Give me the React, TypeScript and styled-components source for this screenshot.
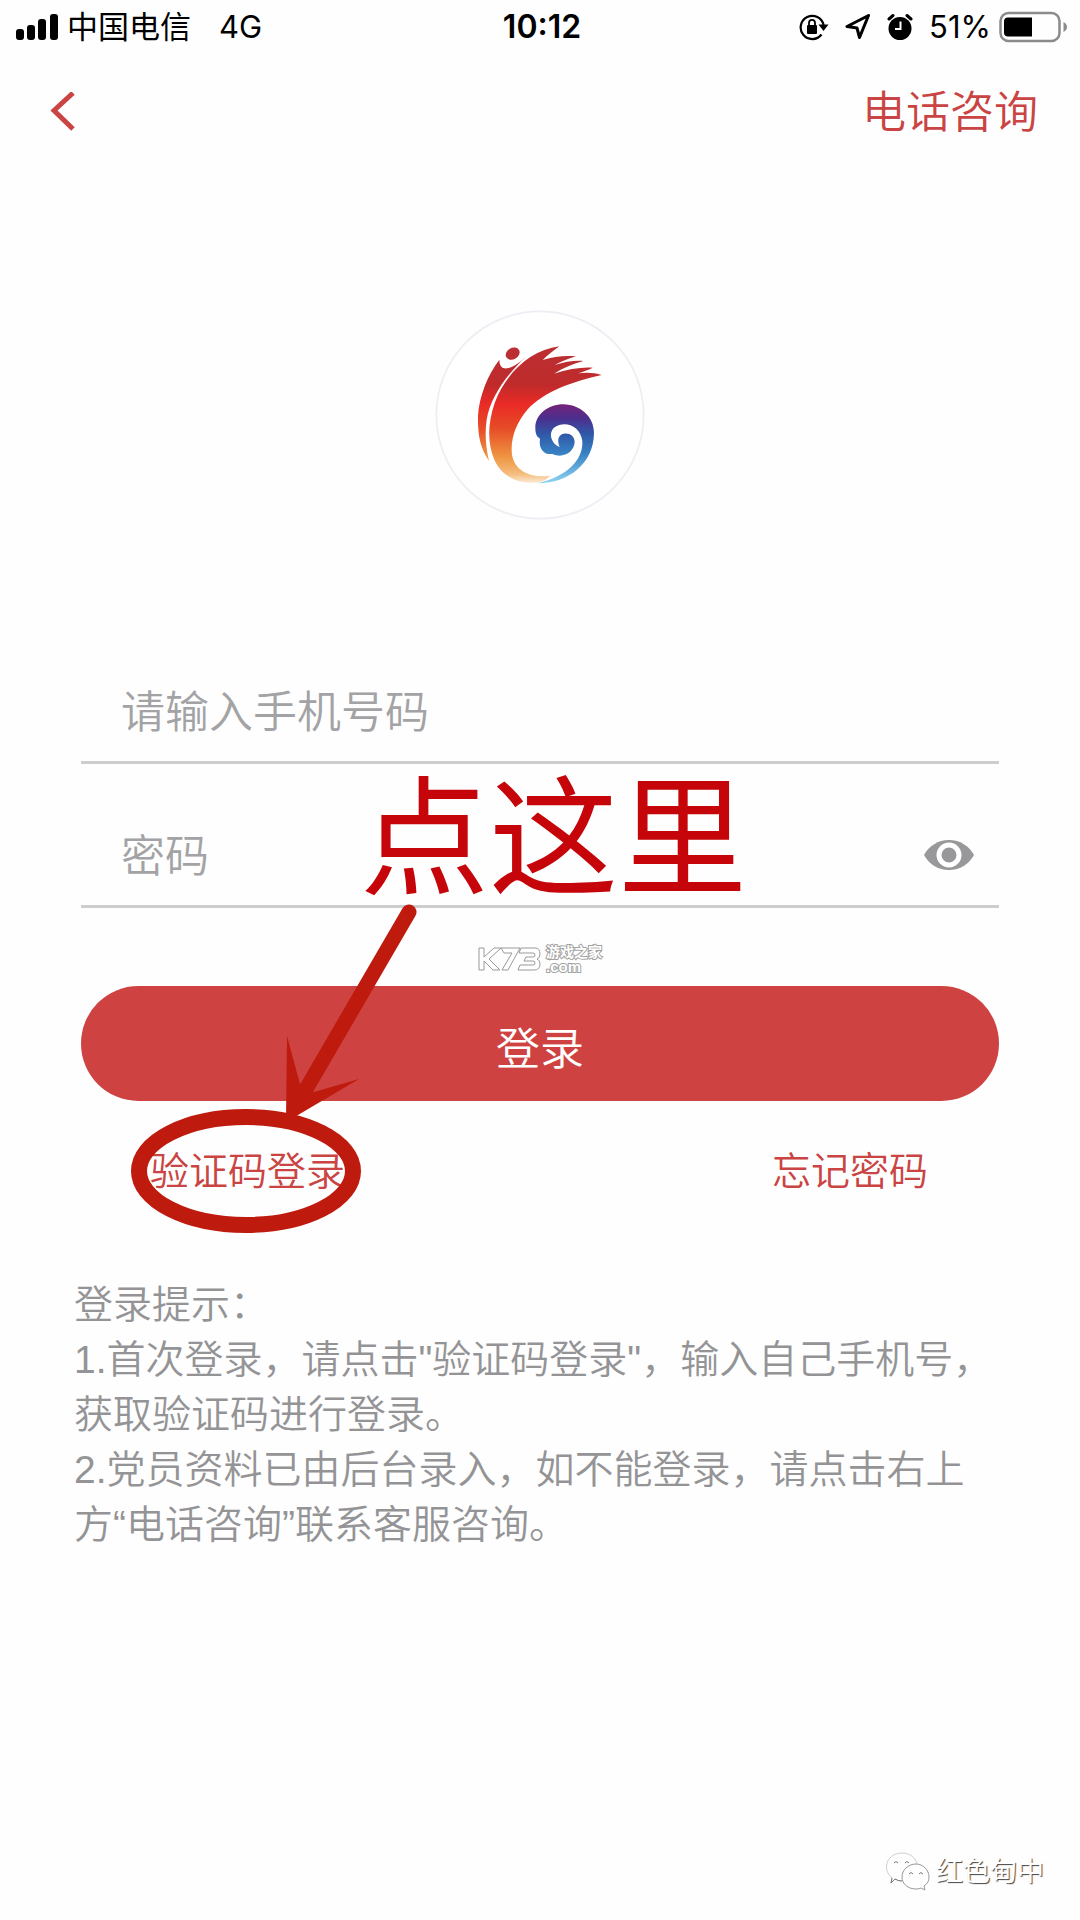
import React, { useState } from "react";
import styled, { createGlobalStyle } from "styled-components";

const latinCjk = `"Liberation Sans", "Noto Sans CJK SC", sans-serif`;
const red = "#ca4443";
const ink = "#be1a0e";

const GlobalStyle = createGlobalStyle`
  *, *::before, *::after { box-sizing: border-box; }
  body { margin: 0; background: #fefefe; font-family: ${latinCjk}; }
  button, input { font-family: inherit; }
`;

const Page = styled.div`
  display: flex;
  flex-direction: column;
  min-height: 100vh;
  overflow: hidden;
`;

const StatusBar = styled.div`
  display: grid;
  grid-template-columns: 1fr auto 1fr;
  align-items: center;
  height: 54px;
  padding: 0 12px 0 16px;
  color: #000;
  font-family: Inter, "Noto Sans CJK SC", sans-serif;
  font-size: 31px;
  line-height: 40px;
`;

const StatusGroup = styled.div<{ $end?: boolean }>`
  display: flex;
  align-items: center;
  justify-content: ${(p) => (p.$end ? "flex-end" : "flex-start")};
`;

const Carrier = styled.span`
  margin: 0 28px 0 8px;
`;

const Clock = styled.time`
  font-size: 32px;
  font-weight: 600;
`;

const StatusIcons = styled.div`
  display: flex;
  align-items: center;
  gap: 16px;
  margin-right: 16px;
`;

const Percent = styled.span`
  margin-right: 8px;
`;

const Header = styled.header`
  display: flex;
  align-items: center;
  justify-content: space-between;
  height: 114px;
  padding: 4px 42px 0 48px;
`;

const BackButton = styled.button`
  display: flex;
  padding: 0;
  border: 0;
  background: none;
`;

const TextLink = styled.a<{ $size: number }>`
  color: ${red};
  font-size: ${(p) => p.$size}px;
  font-weight: 350;
  line-height: 60px;
  text-decoration: none;
`;

const LogoRow = styled.div`
  display: flex;
  justify-content: center;
  margin: 142px 0 140px;
`;

const Form = styled.form`
  position: relative;
  padding: 0 81px;
`;

const Field = styled.div`
  display: flex;
  align-items: center;
  height: 104px;
  padding: 0 24px 0 40px;
  border-bottom: 3px solid #cdcdcd;

  & + & {
    margin-top: 40px;
  }
`;

const InputLabel = styled.label`
  display: flex;
  flex: 1;
  min-width: 0;
`;

const TextInput = styled.input`
  width: 100%;
  height: 76px;
  padding: 4px 0 0;
  border: 0;
  outline: 0;
  background: none;
  color: #333;
  font-size: 44px;
  font-weight: 350;

  &::placeholder {
    color: #a3a3a5;
    opacity: 1;
  }
`;

const EyeButton = styled.button`
  display: flex;
  padding: 0;
  border: 0;
  background: none;
`;

const SubmitButton = styled.button`
  display: block;
  width: 100%;
  height: 115px;
  margin-top: 78px;
  padding: 4px 0 0;
  border: 0;
  border-radius: 58px;
  background: #ce4341;
  color: #fff;
  font-size: 44px;
  font-weight: 350;
`;

const LinkRow = styled.div`
  display: flex;
  justify-content: space-between;
  padding: 0 71px 0 69px;
  margin-top: 41px;
`;

const Tips = styled.section`
  margin-top: 75px;
  padding: 0 80px 0 74px;
  color: #949496;
  font-size: 39px;
  font-weight: 350;
  line-height: 55px;
`;

const TipLine = styled.p`
  margin: 0;
`;

const Footer = styled.footer`
  display: flex;
  align-items: center;
  justify-content: flex-end;
  gap: 6px;
  margin-top: auto;
  padding: 0 36px 28px 0;
`;

const Account = styled.span`
  color: #fff;
  font-size: 27px;
  font-weight: 400;
  line-height: 40px;
  text-shadow: 1px 1px 1px #444;
`;

const Callout = styled.strong`
  position: absolute;
  top: 90px;
  left: 360px;
  color: #c50509;
  font-size: 129px;
  font-weight: 400;
  line-height: 180px;
  white-space: nowrap;
  pointer-events: none;
`;

const Marker = styled.svg`
  position: absolute;
  top: 240px;
  left: 120px;
  pointer-events: none;
`;

const SiteMark = styled.div`
  position: absolute;
  top: 284px;
  left: 0;
  right: 0;
  display: flex;
  align-items: center;
  justify-content: center;
  gap: 4px;
  color: #fff;
  pointer-events: none;
`;

const SiteText = styled.div`
  display: flex;
  flex-direction: column;
  font-size: 14px;
  font-weight: 700;
  line-height: 16px;
  -webkit-text-stroke: 2px #a2a2a2;
  paint-order: stroke fill;
`;

const Domain = styled.span`
  font-size: 15px;
  line-height: 14px;
`;

function SignalIcon() {
  return (
    <svg width="43" height="28" viewBox="0 0 43 28" aria-hidden="true">
      <rect x="0" y="16" width="8" height="11" rx="3" />
      <rect x="11" y="12" width="8" height="15" rx="3" />
      <rect x="22" y="6" width="8" height="21" rx="3" />
      <rect x="34" y="1" width="8" height="26" rx="3" />
    </svg>
  );
}

function RotationLockIcon() {
  return (
    <svg width="30" height="28" viewBox="0 0 30 28" aria-hidden="true">
      <path d="M22.5 21.5A11.6 11.6 0 1 1 24.6 12" fill="none" stroke="#000" strokeWidth="2.2" />
      <path d="M19.5 11.5H29.5L24.5 18Z" />
      <rect x="8" y="12" width="10" height="9" rx="1" />
      <path d="M10 12.500V10a3 3.200 0 0 1 6 0v2.500" fill="none" stroke="#000" strokeWidth="1.800" />
    </svg>
  );
}

function LocationIcon() {
  return (
    <svg width="26" height="28" viewBox="0 0 26 28" aria-hidden="true">
      <path d="M23.500 2.500L2 13.500L12 15L14.500 24.500Z" fill="none" stroke="#000" strokeWidth="3" strokeLinejoin="round" />
    </svg>
  );
}

function AlarmIcon() {
  return (
    <svg width="26" height="28" viewBox="0 0 26 28" aria-hidden="true">
      <circle cx="13" cy="15.500" r="11.500" />
      <path d="M2 6L6 2.500M24 6L20 2.500" stroke="#000" strokeWidth="3" strokeLinecap="round" />
      <path d="M13.500 8.500V16H8" fill="none" stroke="#fff" strokeWidth="2" />
    </svg>
  );
}

function BatteryIcon() {
  return (
    <svg width="69" height="32" viewBox="0 0 69 32" aria-hidden="true">
      <rect x="1.500" y="2" width="59" height="28" rx="8" fill="none" stroke="#8b8b8b" strokeWidth="2.500" />
      <path d="M9 6.500H33V25.500H9Q5 25.500 5 21.500V10.500Q5 6.500 9 6.500Z" />
      <path d="M64.500 11Q68 13 68 16T64.500 21Z" fill="#8b8b8b" />
    </svg>
  );
}

function Logo() {
  return (
    <svg width="210" height="210" viewBox="45 31 630 630" role="img" aria-label="logo">
      <defs>
        <linearGradient id="flame" gradientUnits="userSpaceOnUse" x1="0" y1="140" x2="0" y2="552">
          <stop offset="0" stopColor="#bb2f33" />
          <stop offset="0.28" stopColor="#bf2b2b" />
          <stop offset="0.42" stopColor="#ea2a26" />
          <stop offset="0.6" stopColor="#e64d27" />
          <stop offset="0.8" stopColor="#ef9340" />
          <stop offset="0.93" stopColor="#f4bd7c" />
          <stop offset="1" stopColor="#fdeedd" />
        </linearGradient>
        <linearGradient id="wave" gradientUnits="userSpaceOnUse" x1="0" y1="314" x2="0" y2="552">
          <stop offset="0" stopColor="#752379" />
          <stop offset="0.18" stopColor="#4b2f8f" />
          <stop offset="0.38" stopColor="#2f59a8" />
          <stop offset="0.62" stopColor="#3882c4" />
          <stop offset="1" stopColor="#8fd6f2" />
        </linearGradient>
      </defs>
      <circle cx="360" cy="346" r="311" fill="#fff" stroke="#ededf4" strokeWidth="5" />
      <ellipse cx="278" cy="162" rx="22" ry="17" transform="rotate(-30 278 162)" fill="#bb2f33" />
      <path
        fill="url(#flame)"
        d="M238 180C238 198 246 208 262 206C282 202 300 188 320 170C262 222 212 290 200 360C194 405 197 440 207 484C180 445 173 405 174 350C177 290 205 222 238 180Z"
      />
      <path
        fill="url(#flame)"
        d="M418 140C330 152 258 220 224 310C202 375 203 430 222 478C244 532 296 553 352 549C370 547 382 537 390 528C335 536 284 515 276 465C270 415 290 368 322 330C372 275 460 245 545 226C524 219 500 217 474 221C490 216 504 211 518 204C484 202 444 208 402 222C428 206 456 193 490 184C462 182 434 187 404 196C426 184 446 177 468 170C436 167 402 170 368 181C384 166 398 154 418 140Z"
      />
      <path
        fill="url(#wave)"
        d="M354 551C446 550 521 492 522 400C522 350 480 315 430 314C385 314 345 345 346 385C346 402 350 411 360 417C355 448 372 466 397 463C428 477 461 460 464 428C464 408 448 399 431 402C416 405 410 420 419 442C394 433 383 400 404 383C432 362 482 376 487 425C490 482 440 530 354 551Z"
      />
    </svg>
  );
}

function WechatIcon() {
  return (
    <svg width="44" height="40" viewBox="0 0 44 40" fill="none" stroke="#aaa" strokeWidth="1" aria-hidden="true">
      <path d="M16 29Q12 29 9 27L5 31L6 26Q0 21 0.500 14C1 6 8 1 16 1C24 1 30 6 31 12" stroke="#cfcfcf" />
      <path d="M6 26L5 31L9 27Q12 29 16 29" stroke="#777" />
      <path d="M30 12C22 12 16 18 16 25C16 32 22 37 30 37Q33 37 35 36L39 38L38 34Q43 31 43 25C43 18 37 12 30 12Z" stroke="#999" />
      <path d="M8 11q2-3 4 0M19 11q2-3 4 0M23 22q2-3 4 0M33 22q2-3 4 0" stroke="#777" />
    </svg>
  );
}

function K73Mark() {
  return (
    <svg width="64" height="25" viewBox="0 0 64 25" fill="#fff" stroke="#999" strokeWidth="1" strokeLinejoin="round" aria-label="K73" role="img">
      <path d="M1 1H6V10L16 1H23L11 12L22 23H15L6 14V23H1Z" />
      <path d="M23 1H42L30 23H24L34 6H26Z" />
      <path d="M43 1H57Q62 1 62 7Q62 11 59 12Q62 13 62 17Q62 23 56 23H40L42 18H55Q57 18 57 16T55 14H46L48 10H55Q57 10 57 8T55 6H41Z" />
    </svg>
  );
}

export default function App() {
  const [shown, setShown] = useState(false);

  return (
    <Page>
      <GlobalStyle />
      <StatusBar>
        <StatusGroup>
          <SignalIcon />
          <Carrier>中国电信</Carrier>
          <span>4G</span>
        </StatusGroup>
        <Clock>10:12</Clock>
        <StatusGroup $end>
          <StatusIcons>
            <RotationLockIcon />
            <LocationIcon />
            <AlarmIcon />
          </StatusIcons>
          <Percent>51%</Percent>
          <BatteryIcon />
        </StatusGroup>
      </StatusBar>

      <Header>
        <BackButton type="button" aria-label="返回">
          <svg width="30" height="42" viewBox="0 0 30 42" fill="none" stroke={red} strokeWidth="5" aria-hidden="true">
            <path d="M25 1L6 18.500L25 37" />
          </svg>
        </BackButton>
        <TextLink href="#call" $size={44}>电话咨询</TextLink>
      </Header>

      <LogoRow>
        <Logo />
      </LogoRow>

      <Form onSubmit={(e) => e.preventDefault()}>
        <Field>
          <InputLabel htmlFor="phone">
            <TextInput id="phone" type="tel" aria-label="手机号码" placeholder="请输入手机号码" />
          </InputLabel>
        </Field>
        <Field>
          <InputLabel htmlFor="password">
            <TextInput id="password" type={shown ? "text" : "password"} aria-label="密码" placeholder="密码" />
          </InputLabel>
          <EyeButton type="button" aria-label="显示密码" onClick={() => setShown(!shown)}>
            <svg width="52" height="32" viewBox="0 0 52 32" aria-hidden="true">
              <path d="M1 16C6 7 15 1 26 1S46 7 51 16C46 25 37 31 26 31S6 25 1 16Z" fill="#98989a" />
              <circle cx="26" cy="16" r="10" fill="#98989a" stroke="#fff" strokeWidth="5" />
            </svg>
          </EyeButton>
        </Field>
        <SubmitButton type="submit">登录</SubmitButton>
        <LinkRow>
          <TextLink href="#code" $size={39}>验证码登录</TextLink>
          <TextLink href="#forgot" $size={39}>忘记密码</TextLink>
        </LinkRow>

        <SiteMark>
          <K73Mark />
          <SiteText>
            <span>游戏之家</span>
            <Domain>.com</Domain>
          </SiteText>
        </SiteMark>
        <Callout>点这里</Callout>
        <Marker width="310" height="345" viewBox="120 900 310 345" aria-hidden="true">
          <path d="M409 912L302 1096" stroke={ink} strokeWidth="15" strokeLinecap="round" />
          <path d="M287 1036L300 1084L314 1092L359 1079L298 1115L286 1120Z" fill={ink} />
          <ellipse cx="246" cy="1171" rx="107" ry="54" fill="none" stroke={ink} strokeWidth="16" />
        </Marker>
      </Form>

      <Tips>
        <TipLine>登录提示：</TipLine>
        <TipLine>1.首次登录，请点击"验证码登录"，输入自己手机号，获取验证码进行登录。</TipLine>
        <TipLine>2.党员资料已由后台录入，如不能登录，请点击右上方“电话咨询”联系客服咨询。</TipLine>
      </Tips>

      <Footer>
        <WechatIcon />
        <Account>红色甸中</Account>
      </Footer>
    </Page>
  );
}
